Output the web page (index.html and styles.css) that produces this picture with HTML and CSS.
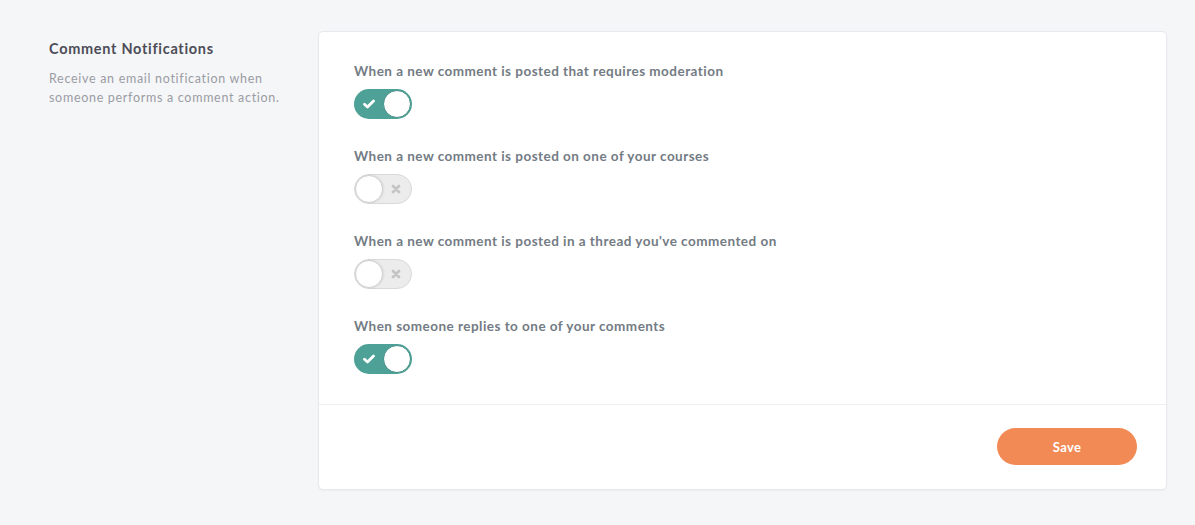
FILE: index.html
```html
<!DOCTYPE html>
<html>
<head>
<meta charset="utf-8">
<link rel="stylesheet" href="styles.css">
</head>
<body>
<div class="page">
  <div class="intro">
    <h2 class="intro-title">Comment Notifications</h2>
    <p class="intro-text">Receive an email notification when someone performs a comment action.</p>
  </div>
  <div class="card">
    <div class="card-body">
      <div class="setting">
        <div class="setting-label">When a new comment is posted that requires moderation</div>
        <span class="toggle on"><span class="icon"><svg width="12" height="10" viewBox="0 0 12 10"><path d="M1.5 5.2 L4.5 8 L10.5 2" fill="none" stroke="#fff" stroke-width="2.8" stroke-linecap="round" stroke-linejoin="round"/></svg></span><span class="knob"></span></span>
      </div>
      <div class="setting">
        <div class="setting-label">When a new comment is posted on one of your courses</div>
        <span class="toggle off"><span class="knob"></span><span class="icon"><svg width="10" height="10" viewBox="0 0 10 10"><path d="M2 2 L8 8 M8 2 L2 8" fill="none" stroke="#c4c4c4" stroke-width="2.8" stroke-linecap="round"/></svg></span></span>
      </div>
      <div class="setting">
        <div class="setting-label">When a new comment is posted in a thread you've commented on</div>
        <span class="toggle off"><span class="knob"></span><span class="icon"><svg width="10" height="10" viewBox="0 0 10 10"><path d="M2 2 L8 8 M8 2 L2 8" fill="none" stroke="#c4c4c4" stroke-width="2.8" stroke-linecap="round"/></svg></span></span>
      </div>
      <div class="setting">
        <div class="setting-label">When someone replies to one of your comments</div>
        <span class="toggle on"><span class="icon"><svg width="12" height="10" viewBox="0 0 12 10"><path d="M1.5 5.2 L4.5 8 L10.5 2" fill="none" stroke="#fff" stroke-width="2.8" stroke-linecap="round" stroke-linejoin="round"/></svg></span><span class="knob"></span></span>
      </div>
    </div>
    <div class="card-footer">
      <button class="save">Save</button>
    </div>
  </div>
</div>
</body>
</html>
```

FILE: styles.css
```css
html, body {
  margin: 0;
  padding: 0;
  background: #f5f6f8;
  font-family: Lato, "Noto Sans", sans-serif;
}
.page {
  display: flex;
  padding: 31px 28px 35px 49px;
}
.intro {
  width: 269px;
  flex-shrink: 0;
}
.intro-title {
  margin: 9px 0 0;
  font-size: 14.5px;
  font-weight: 700;
  color: #4d4d57;
  line-height: 18px;
  letter-spacing: 0.7px;
}
.intro-text {
  margin: 11px 0 0;
  font-size: 12.5px;
  line-height: 19px;
  color: #9a9ca4;
  width: 240px;
  letter-spacing: 0.7px;
}
.card {
  flex: 1;
  background: #fff;
  border: 1px solid #e8e9ec;
  border-radius: 5px;
  box-shadow: 0 1px 2px rgba(0,0,0,0.04);
}
.card-body {
  padding: 30px 35px 30px;
  display: flex;
  flex-direction: column;
  gap: 28px;
}
.setting-label {
  font-size: 13.5px;
  font-weight: 700;
  color: #737b84;
  line-height: 18px;
  margin-bottom: 9px;
  letter-spacing: 0.47px;
}
.toggle {
  display: flex;
  align-items: center;
  box-sizing: border-box;
  width: 58px;
  height: 30px;
  border-radius: 15px;
  padding: 1px;
}
.toggle.on {
  background: #4da197;
  justify-content: space-between;
}
.toggle.off {
  background: #ececec;
  border: 1px solid #d9d9d9;
  padding: 0;
}
.knob {
  border-radius: 50%;
  background: #fff;
  box-sizing: border-box;
}
.toggle.on .knob {
  border: 1px solid #3f8d84;
  width: 28px;
  height: 28px;
}
.toggle.off .knob {
  border: 1px solid #d0d0d0;
  width: 28px;
  height: 28px;
  box-shadow: 1px 0 2px rgba(0,0,0,0.08);
}
.icon {
  display: flex;
  flex: 1;
  justify-content: center;
  align-items: center;
}
.toggle.off .icon { padding-right: 2px; }
.card-footer {
  border-top: 1px solid #eceef0;
  padding: 23px 29px 24px;
  display: flex;
  justify-content: flex-end;
}
.save {
  width: 140px;
  height: 37px;
  border: none;
  border-radius: 19px;
  background: #f28a55;
  color: #fff;
  font-family: Lato, "Noto Sans", sans-serif;
  font-weight: 700;
  font-size: 13px;
  letter-spacing: 0.3px;
}
```
